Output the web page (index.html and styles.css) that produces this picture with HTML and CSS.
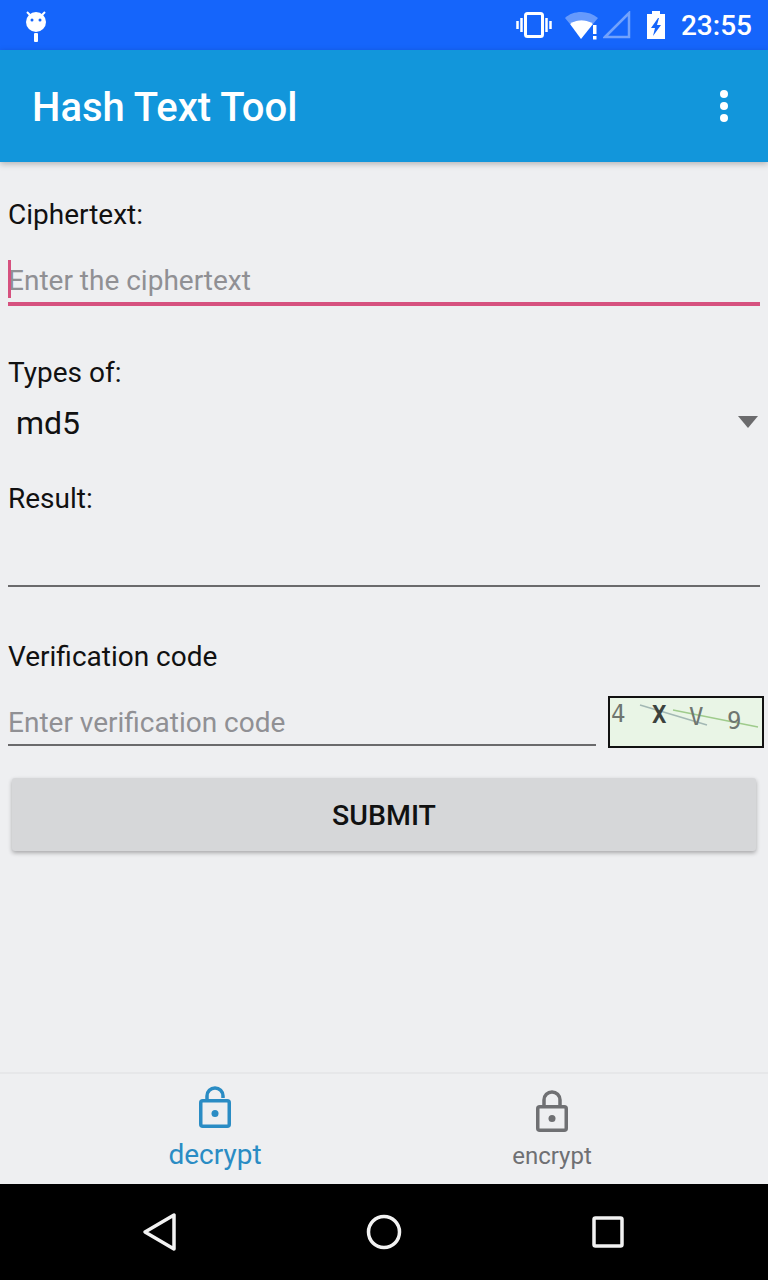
FILE: index.html
```html
<!DOCTYPE html>
<html lang="en">
<head>
  <meta charset="UTF-8" />
  <meta name="viewport" content="width=device-width, initial-scale=1" />
  <title>Hash Text Tool</title>
  <link rel="stylesheet" href="styles.css">
</head>
<body>
  <div class="screen">
    <div class="status-bar">
      <svg class="status-android" width="30" height="36" viewBox="0 0 30 36" aria-hidden="true">
        <path d="M6 3l5 5M24 3l-5 5" stroke="#fff" stroke-width="2" fill="none"/>
        <circle cx="15" cy="13" r="10" fill="#fff"/>
        <circle cx="11" cy="11" r="1.5" fill="#1565fb"/>
        <circle cx="19" cy="11" r="1.5" fill="#1565fb"/>
        <rect x="13" y="24" width="4" height="9" rx="1" fill="#fff"/>
      </svg>
      <div class="status-right">
        <svg class="status-vibrate" width="36" height="26" viewBox="0 0 36 26" aria-hidden="true">
          <rect x="9.5" y="1.5" width="17" height="23" rx="2" fill="none" stroke="#fff" stroke-width="3"/>
          <path d="M5.5 6v14M1.5 9v8M30.5 6v14M34.5 9v8" stroke="#fff" stroke-width="2.5" fill="none"/>
        </svg>
        <svg class="status-wifi" width="36" height="30" viewBox="0 0 36 30" aria-hidden="true">
          <path d="M0 8C8 0 24 0 33 8L28 14C22 9 11 9 5 14Z" fill="#fff" opacity=".35"/>
          <path d="M5 14C11 9 22 9 28 14L16 29Z" fill="#fff"/>
          <rect x="28" y="15" width="3.5" height="9" fill="#fff"/>
          <rect x="28" y="26" width="3.5" height="3.5" fill="#fff"/>
        </svg>
        <svg class="status-signal" width="28" height="28" viewBox="0 0 28 28" aria-hidden="true">
          <path d="M2 26L26 2V26Z" fill="none" stroke="#fff" stroke-opacity=".4" stroke-width="2.5"/>
        </svg>
        <svg class="status-battery" width="20" height="30" viewBox="0 0 20 30" aria-hidden="true">
          <path d="M6 1h8v3h5v25H1V4h5Z" fill="#fff"/>
          <path d="M12 8L5 18h4l-2 8 8-11h-4l2-7Z" fill="#1565fb"/>
        </svg>
        <span class="status-time">23:55</span>
      </div>
    </div>

    <header class="app-bar">
      <h1 class="app-title">Hash Text Tool</h1>
      <div class="overflow-menu" aria-label="More options">
        <span></span><span></span><span></span>
      </div>
    </header>

    <main class="content">
      <label class="field-label label-cipher">Ciphertext:</label>
      <div class="input input-focused">
        <span class="caret"></span>
        <span class="placeholder">Enter the ciphertext</span>
      </div>

      <label class="field-label label-types">Types of:</label>
      <div class="spinner">
        <span class="spinner-value">md5</span>
        <span class="spinner-arrow"></span>
      </div>

      <label class="field-label label-result">Result:</label>
      <div class="input input-result"></div>

      <label class="field-label label-code">Verification code</label>
      <div class="code-row">
        <div class="input input-code">
          <span class="placeholder">Enter verification code</span>
        </div>
        <svg class="captcha" width="156" height="52" viewBox="0 0 156 52" role="img" aria-label="Verification image">
          <rect x="1" y="1" width="154" height="50" fill="#e9f5e6" stroke="#111" stroke-width="2"/>
          <path d="M32 9L99 29" stroke="#a3b8b4" stroke-width="1.5" fill="none"/>
          <path d="M65 14L150 31" stroke="#9fcb8c" stroke-width="1.5" fill="none"/>
          <text x="3" y="26" class="captcha-text">4</text>
          <text x="44" y="27" class="captcha-text captcha-dark">X</text>
          <text x="81" y="29" class="captcha-text">V</text>
          <text x="119" y="33" class="captcha-text">9</text>
        </svg>
      </div>

      <button class="submit" type="button">SUBMIT</button>
    </main>

    <nav class="tab-bar">
      <div class="tab tab-active">
        <svg width="36" height="42" viewBox="0 0 36 42" aria-hidden="true">
          <path d="M10 14V10a8 8 0 0 1 16 0v2" fill="none" stroke="#2a8cc4" stroke-width="3.5"/>
          <rect x="3.75" y="14.75" width="28.5" height="25.5" rx="2" fill="none" stroke="#2a8cc4" stroke-width="3.5"/>
          <circle cx="18" cy="27.5" r="3.5" fill="#2a8cc4"/>
        </svg>
        <span class="tab-label">decrypt</span>
      </div>
      <div class="tab tab-idle">
        <svg width="36" height="42" viewBox="0 0 36 42" aria-hidden="true">
          <path d="M10 16V10a8 8 0 0 1 16 0v6" fill="none" stroke="#6f7073" stroke-width="3.5"/>
          <rect x="3.75" y="16.75" width="28.5" height="23.5" rx="2" fill="none" stroke="#6f7073" stroke-width="3.5"/>
          <circle cx="18" cy="28.5" r="3.5" fill="#6f7073"/>
        </svg>
        <span class="tab-label">encrypt</span>
      </div>
    </nav>

    <div class="nav-bar">
      <svg width="34" height="40" viewBox="0 0 34 40" aria-hidden="true">
        <path d="M32 3V37L3 20Z" fill="none" stroke="#f2f2f2" stroke-width="3.5" stroke-linejoin="round"/>
      </svg>
      <svg width="36" height="36" viewBox="0 0 36 36" aria-hidden="true">
        <circle cx="18" cy="18" r="15.5" fill="none" stroke="#f2f2f2" stroke-width="3.5"/>
      </svg>
      <svg width="32" height="32" viewBox="0 0 32 32" aria-hidden="true">
        <rect x="2" y="2" width="28" height="28" rx="1.5" fill="none" stroke="#f2f2f2" stroke-width="3.5"/>
      </svg>
    </div>
  </div>
</body>
</html>
```

FILE: styles.css
```css
:root {
  --status-blue: #1565fb;
  --bar-blue: #1296db;
  --page-bg: #eeeff1;
  --text-dark: #111;
  --hint: #909094;
  --line: #6a6a6c;
  --pink: #d6517f;
}
* {
  box-sizing: border-box;
}
html, body {
  margin: 0;
  height: 100%;
}
body {
  font-family: Roboto, 'Liberation Sans', sans-serif;
  background-color: var(--page-bg);
  color: var(--text-dark);
}
.screen {
  display: flex;
  flex-direction: column;
  width: 768px;
  height: 1280px;
  overflow: hidden;
}

/* Status bar */
.status-bar {
  display: flex;
  align-items: center;
  justify-content: space-between;
  flex: 0 0 50px;
  padding: 0 16px 0 21px;
  background-color: var(--status-blue);
}
.status-android {
  margin-top: 4px;
}
.status-right {
  display: flex;
  align-items: center;
}
.status-wifi {
  margin-left: 13px;
}
.status-signal {
  margin-left: 2px;
}
.status-battery {
  margin-left: 15px;
}
.status-time {
  color: #fff;
  font-size: 28px;
  font-weight: 500;
  margin-left: 15px;
}

/* App bar */
.app-bar {
  display: flex;
  align-items: center;
  justify-content: space-between;
  flex: 0 0 112px;
  padding: 0 40px 0 32px;
  background-color: var(--bar-blue);
  box-shadow: 0 2px 6px rgba(0,0,0,0.25);
  position: relative;
}
.app-title {
  margin: 3px 0 0;
  color: #fff;
  font-size: 40px;
  font-weight: 500;
}
.overflow-menu {
  display: flex;
  flex-direction: column;
  gap: 4px;
}
.overflow-menu span {
  width: 8px;
  height: 8px;
  border-radius: 50%;
  background-color: #fff;
}

/* Form */
.content {
  display: flex;
  flex-direction: column;
  flex: 1;
  padding: 0 8px;
}
.field-label {
  display: block;
  font-size: 28px;
  line-height: 32px;
}
.label-cipher {
  margin-top: 37px;
}
.label-types {
  margin-top: 51px;
}
.label-result {
  margin-top: 35px;
}
.label-code {
  margin-top: 54px;
}
.input {
  display: flex;
  align-items: center;
  position: relative;
  height: 48px;
  border-bottom: 2px solid var(--line);
}
.input-focused {
  margin-top: 27px;
  border-bottom: 4px solid var(--pink);
}
.input-result {
  margin-top: 24px;
}
.input-code {
  padding-top: 2px;
}
.placeholder {
  color: var(--hint);
  font-size: 28px;
}
.caret {
  position: absolute;
  left: 0;
  top: 2px;
  width: 3px;
  height: 38px;
  background-color: var(--pink);
}
.spinner {
  display: flex;
  align-items: center;
  justify-content: space-between;
  height: 50px;
  padding: 0 2px 0 8px;
  margin-top: 9px;
}
.spinner-value {
  font-size: 32px;
}
.spinner-arrow {
  width: 0;
  height: 0;
  margin-top: -2px;
  border-left: 10px solid transparent;
  border-right: 10px solid transparent;
  border-top: 12px solid #6b6b6d;
}
.code-row {
  display: flex;
  align-items: flex-end;
  justify-content: space-between;
  margin-top: 23px;
  margin-right: -4px;
}
.input-code {
  width: 588px;
  margin-bottom: 2px;
}
.captcha-text {
  font-family: 'DejaVu Sans Mono', monospace;
  font-size: 24px;
  fill: #6f7670;
}
.captcha-dark {
  fill: #3c423d;
  font-weight: 700;
}
.submit {
  height: 73px;
  margin: 30px 4px 0;
  padding-top: 3px;
  border: 0;
  border-radius: 3px;
  background-color: #d6d7d9;
  box-shadow: 0 2px 4px rgba(0,0,0,0.3);
  color: var(--text-dark);
  font-family: inherit;
  font-size: 28.5px;
  font-weight: 500;
}

/* Tabs */
.tab-bar {
  display: grid;
  grid-template-columns: 430px 1fr;
  flex: 0 0 112px;
  border-top: 2px solid #e6e7e9;
  background-color: var(--page-bg);
}
.tab {
  display: flex;
  flex-direction: column;
  align-items: center;
}
.tab-active {
  color: #2a8cc4;
  font-size: 28px;
  padding-top: 12px;
}
.tab-active .tab-label {
  margin-top: 11px;
}
.tab-idle {
  color: #6f7073;
  font-size: 24px;
  padding-top: 16px;
  padding-right: 94px;
}
.tab-idle .tab-label {
  margin-top: 8px;
}
.tab-label {
  line-height: 32px;
}

/* Nav bar */
.nav-bar {
  display: flex;
  align-items: center;
  justify-content: space-between;
  flex: 0 0 96px;
  padding: 0 144px 0 142px;
  background-color: #000;
}
```
